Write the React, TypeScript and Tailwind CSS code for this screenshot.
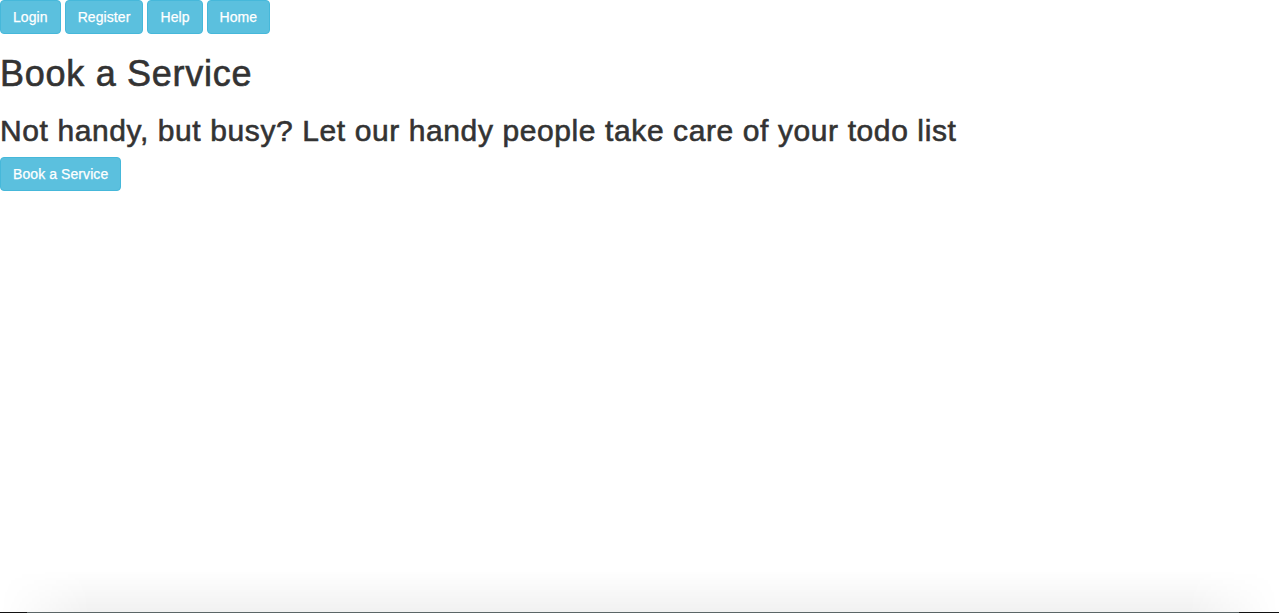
import React from "react";

const btn =
  "inline-block rounded-[4px] border border-[#46b8da] bg-[#5bc0de] px-[12px] py-[6px] text-[14px] leading-[20px] text-white tracking-[0.08px] [-webkit-text-stroke:0.25px_white]";

export default function App() {
  return (
    <div
      className="flex min-h-[613px] flex-col overflow-hidden bg-white text-[#333333]"
      style={{ fontFamily: '"Liberation Sans", Arial, sans-serif' }}
    >
      <div className="flex-1">
        <div className="flex gap-[4px]">
          <button className={btn}>Login</button>
          <button className={btn}>Register</button>
          <button className={btn}>Help</button>
          <button className={btn}>Home</button>
        </div>
        <h1 className="mt-[20px] mb-[10px] text-[36px] leading-[1.1] font-normal tracking-[0.02em] [-webkit-text-stroke:0.6px_#333333]">
          Book a Service
        </h1>
        <h2 className="mt-[20px] mb-[10px] text-[30px] leading-[1.1] font-normal tracking-[0.02em] [-webkit-text-stroke:0.6px_#333333]">
          Not handy, but busy? Let our handy people take care of your todo list
        </h2>
        <button className={btn}>Book a Service</button>
      </div>
      <div className="h-[42px] bg-[linear-gradient(to_bottom,rgba(0,0,0,0),rgba(0,0,0,0.055))] [mask-image:linear-gradient(to_right,transparent,black_90px,black_calc(100%-90px),transparent)]" />
      <div className="h-[1px] bg-[linear-gradient(to_right,#111_0,#111_27px,#5b6566_27px,#5b6566_calc(100%-40px),#111_calc(100%-40px))]" />
    </div>
  );
}
